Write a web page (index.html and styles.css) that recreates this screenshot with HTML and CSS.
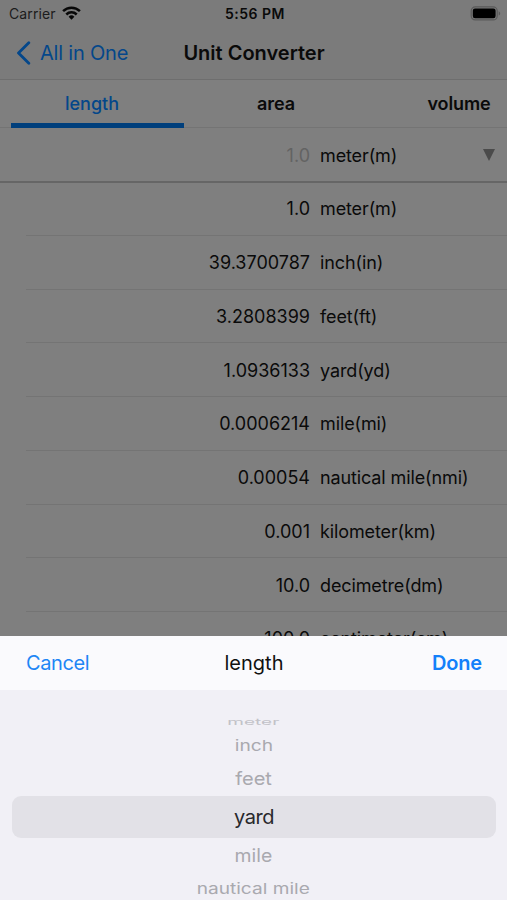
FILE: index.html
```html
<!DOCTYPE html>
<html lang="en">
<head>
<meta charset="utf-8">
<title>Unit Converter</title>
<link rel="stylesheet" href="styles.css">
</head>
<body>
<div class="screen">
  <main class="page">
    <header class="header">
      <div class="status">
        <div class="carrier"><span>Carrier</span>
          <svg class="wifi" width="19" height="14" viewBox="0 0 19 14" fill="none" stroke="#080808" stroke-width="2.5"><path d="M1.1 5.2a12 12 0 0 1 16.8 0M4.3 8.5a7.4 7.4 0 0 1 10.4 0"/><path d="M6.6 10.7a4.2 4.2 0 0 1 5.8 0L9.5 13.7z" fill="#080808" stroke="none"/></svg>
        </div>
        <time class="time">5:56 PM</time>
        <svg class="battery" width="31" height="15" viewBox="0 0 31 15"><rect x="1.2" y=".9" width="26" height="13" rx="4" fill="none" stroke="#5a5a5a" stroke-width="1.2"/><rect x="2.8" y="2.5" width="22.8" height="9.8" rx="2.2" fill="#000"/><path d="M28.7 5.2c2 .9 2 3.5 0 4.4z" fill="#5a5a5a"/></svg>
      </div>
      <nav class="nav">
        <a class="back"><svg width="15" height="25" viewBox="0 0 15 25" fill="none" stroke="#04478a" stroke-width="2.8" stroke-linecap="round" stroke-linejoin="round"><path d="M12.8 1.8 2.5 12l10.3 10.2"/></svg><span>All in One</span></a>
        <h1 class="title">Unit Converter</h1>
      </nav>
    </header>
    <div class="tabs"><span class="tab active">length</span><span class="tab">area</span><span class="tab">volume</span></div>
    <div class="input-row"><span class="value hint">1.0</span><span class="unit">meter(m)</span><svg class="arrow" width="12" height="12" viewBox="0 0 12 12"><path d="M0 0h12L6 12z" fill="#4b4b4b"/></svg></div>
    <div class="rows">
      <div class="row"><span class="value">1.0</span><span class="unit">meter(m)</span></div>
      <div class="row"><span class="value">39.3700787</span><span class="unit">inch(in)</span></div>
      <div class="row"><span class="value">3.2808399</span><span class="unit">feet(ft)</span></div>
      <div class="row"><span class="value">1.0936133</span><span class="unit">yard(yd)</span></div>
      <div class="row"><span class="value">0.0006214</span><span class="unit">mile(mi)</span></div>
      <div class="row"><span class="value">0.00054</span><span class="unit">nautical mile(nmi)</span></div>
      <div class="row"><span class="value">0.001</span><span class="unit">kilometer(km)</span></div>
      <div class="row"><span class="value">10.0</span><span class="unit">decimetre(dm)</span></div>
      <div class="row"><span class="value">100.0</span><span class="unit">centimeter(cm)</span></div>
    </div>
  </main>
  <section class="sheet">
    <div class="toolbar"><span class="cancel">Cancel</span><span class="sheet-title">length</span><span class="done">Done</span></div>
    <div class="wheel">
      <div class="item far"><span>meter</span></div>
      <div class="item mid"><span>inch</span></div>
      <div class="item near"><span>feet</span></div>
      <div class="item selected"><span>yard</span></div>
      <div class="item below"><span>mile</span></div>
      <div class="item last"><span>nautical mile</span></div>
    </div>
  </section>
</div>
</body>
</html>
```

FILE: styles.css
```css
* { box-sizing: border-box; }
body { margin: 0; font-family: Inter, "Liberation Sans", sans-serif; font-size: 18px; color: #0a0a0a; }
.screen { width: 507px; height: 900px; overflow: hidden; display: flex; flex-direction: column; background: #7f7f7f; }
.page { height: 636px; overflow: hidden; flex: none; }
.header { height: 80px; background: #7b7b7b; border-bottom: 1px solid #6e6e6e; }
.status { height: 27px; display: grid; grid-template-columns: 1fr auto 1fr; align-items: center; padding: 0 6px 0 9px; }
.carrier { display: flex; align-items: center; gap: 6px; font-size: 14px; letter-spacing: .1px; color: #1c1c1c; }
.wifi { margin-top: -2px; }
.time { font-size: 14px; font-weight: 600; letter-spacing: .5px; }
.battery { justify-self: end; }
.nav { height: 52px; display: grid; grid-template-columns: 1fr auto 1fr; align-items: center; padding: 0 15px 0 16px; }
.back { display: flex; align-items: center; gap: 9px; color: #04478a; font-size: 20px; letter-spacing: -.2px; }
.title { margin: 0; font-size: 20px; font-weight: 600; letter-spacing: 0; }
.tabs { height: 48px; display: grid; grid-template-columns: 173px 173px 173px; column-gap: 10px; padding-left: 11px; border-bottom: 1px solid #747474; text-align: center; font-weight: 600; line-height: 47px; }
.tab { height: 48px; margin-right: 9px; letter-spacing: -.1px; }
.active { color: #04478a; border-bottom: 5px solid #003f7c; margin-right: 0; padding-right: 11px; font-weight: 500; letter-spacing: 0; }
.input-row { height: 55px; display: flex; align-items: center; padding-top: 1px; border-bottom: 2px solid #666; }
.value { width: 310px; text-align: right; }
.unit { margin-left: 10px; letter-spacing: -.12px; }
.hint { color: #636363; }
.arrow { margin: 0 12px 0 auto; }
.rows { margin-top: -1px; }
.row { height: 53.75px; position: relative; display: flex; align-items: center; }
.row::after { content: ""; position: absolute; left: 26px; right: 0; bottom: 0; height: 1px; background: #747474; }
.sheet { height: 264px; background: #f1f0f6; }
.toolbar { height: 54px; background: #fafafd; display: grid; grid-template-columns: 1fr auto 1fr; align-items: center; padding: 0 25px 0 26px; font-size: 20px; }
.cancel { color: #1e86f5; letter-spacing: -.4px; }
.sheet-title { color: #111; }
.done { color: #1380fa; font-weight: 600; justify-self: end; letter-spacing: -.2px; }
.wheel { padding-top: 24px; font-size: 20px; color: #a9a9af; text-align: center; }
.item { display: flex; align-items: center; justify-content: center; }
.item span { display: block; }
.far { height: 16px; color: #c2c2c8; }
.far span { transform: scale(.95, .45); }
.mid { height: 31px; }
.mid span { transform: scale(.96, .75); }
.near { height: 35px; }
.near span { transform: scaleY(.92); }
.selected { height: 42px; margin: 0 11px 0 12px; border-radius: 9px; background: #e2e1e7; color: #28282b; letter-spacing: -.4px; }
.below { height: 35px; }
.below span { transform: scale(.97, .92); }
.last { height: 31px; }
.last span { transform: scale(.955, .75); }
```
